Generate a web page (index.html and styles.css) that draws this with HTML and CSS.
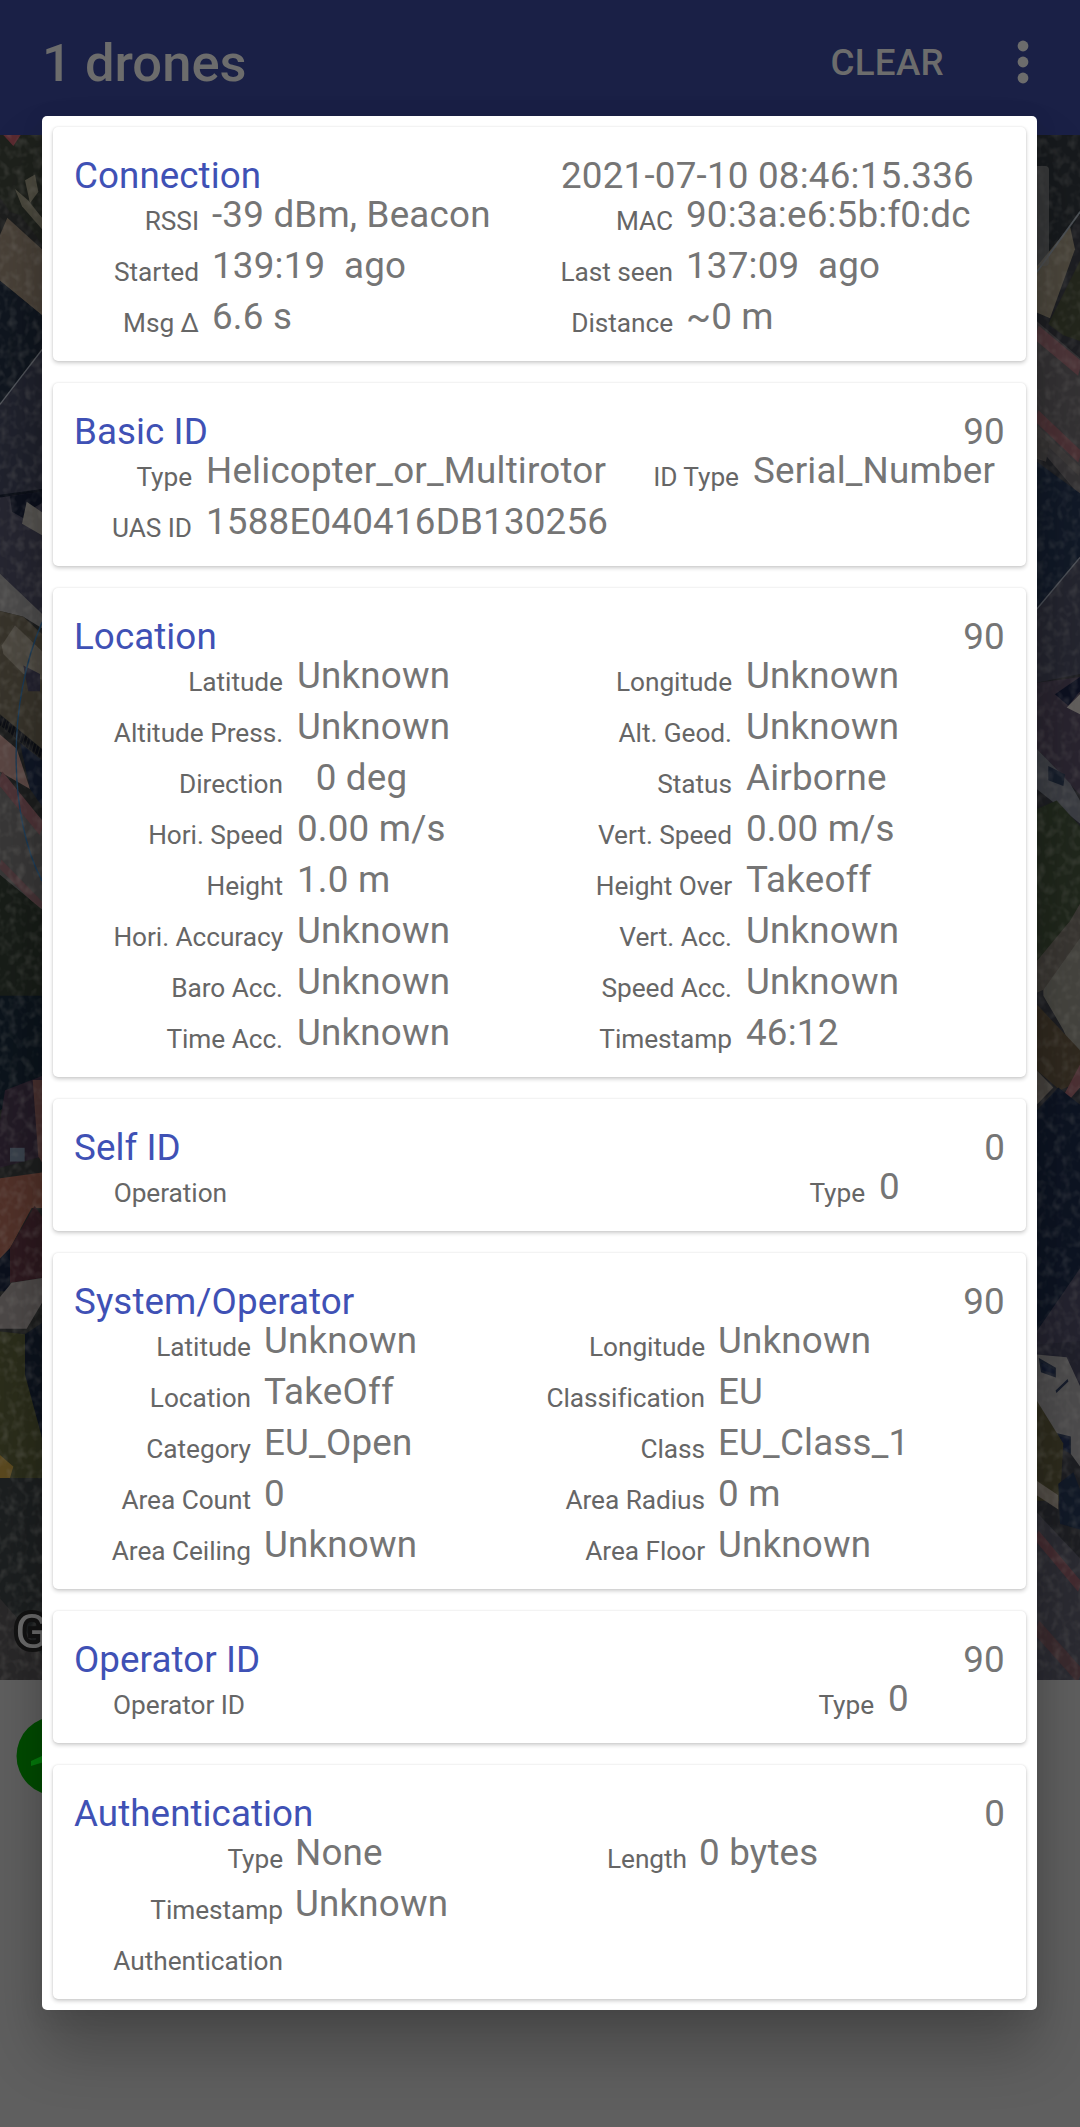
FILE: index.html
```html
<!DOCTYPE html>
<html lang="en">
<head>
<meta charset="utf-8">
<title>Drones</title>
<link rel="stylesheet" href="styles.css">
</head>
<body>
<div class="screen">
  <header class="appbar">
    <h1 class="appbar-title">1 drones</h1>
    <span class="appbar-action">CLEAR</span>
    <svg class="appbar-more" width="12" height="44" viewBox="0 0 12 44"><circle cx="6" cy="6" r="5.4"/><circle cx="6" cy="22" r="5.4"/><circle cx="6" cy="38" r="5.4"/></svg>
  </header>
  <div class="map">
    <svg class="strip" viewBox="0 61 180 2691" preserveAspectRatio="none">
      <defs>
        <filter id="grain" x="0" y="0" width="100%" height="100%"><feTurbulence type="fractalNoise" baseFrequency="0.04 0.06" numOctaves="2" seed="4"/><feColorMatrix values="0 0 0 0 .26  0 0 0 0 .25  0 0 0 0 .23  1.8 0 0 0 -.8"/></filter>
      </defs>
      <rect y="61" width="180" height="2691" fill="#1d1e1e"/>
      <path d="M0 61H126V250L60 200L30 195L0 170Z" fill="#1e211c"/>
      <path d="M10 61H62L40 80Z" fill="#5a2a30"/>
      <path d="M75 140l30-10 10 30-25 20z" fill="#4c4a3f"/>
      <path d="M45 155l40 20 41 30v20l-60-40z" fill="#4b493e"/>
      <path d="M0 235L22 205L126 260V375L0 315Z" fill="#494138"/>
      <path d="M0 315L126 375V432L0 530Z" fill="#10161f"/>
      <path d="M0 530L126 435V680L0 690Z" fill="#20222d"/>
      <path d="M0 530L126 435" stroke="#50545b" stroke-width="3"/>
      <path d="M0 690L126 680V900L0 830Z" fill="#262631"/>
      <path d="M0 690L126 680" stroke="#0c1019" stroke-width="5"/>
      <path d="M30 690l96-8v20l-30 10v25l-60-20z" fill="#0c101c"/>
      <path d="M80 700l46 18v40l-60-20z" fill="#555350"/>
      <path d="M0 825L126 895V920L70 900L0 890Z" fill="#4d4c4c"/>
      <path d="M0 890L70 900L126 930V1130L0 1070Z" fill="#38342b"/>
      <path d="M5 950L45 915L126 960V1010L70 1000L10 965Z" fill="#4e4a42"/>
      <path d="M70 985L120 1000V1030L85 1030Z" fill="#242330"/>
      <path d="M0 1080L126 1140" stroke="#0c0e14" stroke-width="16" stroke-dasharray="7 3"/>
      <path d="M0 1105L50 1130L90 1200L0 1170Z" fill="#5a4643"/>
      <path d="M60 1120L126 1150V1230L90 1200Z" fill="#101726"/>
      <path d="M0 1170L126 1255V1410L0 1350Z" fill="#393838"/>
      <path d="M0 1180L126 1270" stroke="#4d3337" stroke-width="25"/>
      <path d="M0 1330L126 1405" stroke="#473437" stroke-width="16"/>
      <path d="M0 1350L126 1410V1560L0 1570Z" fill="#181d18"/>
      <path d="M126 910C20 1050 25 1250 126 1360" fill="none" stroke="#1b3a55" stroke-width="4"/>
      <path d="M0 1560H126V1700L0 1760Z" fill="#0c141c"/>
      <path d="M15 1725L126 1700V1840L0 1860V1780Z" fill="#231b26"/>
      <path d="M98 1707H126V1850L115 1840Z" fill="#48302f"/>
      <path d="M30 1825h44v24h-44z" fill="#3a424c"/>
      <path d="M0 1878L126 1868V1930L95 1930L30 2000L0 2018Z" fill="#513129"/>
      <path d="M104 1926L126 1945V2052L30 2060V2000Z" fill="#2d191f"/>
      <path d="M0 2018L30 2000V2075H0Z" fill="#0b101c"/>
      <path d="M35 2060L126 2052V2095L80 2140H0V2085Z" fill="#4d4948"/>
      <path d="M0 2145L75 2150L125 2280L126 2400H0Z" fill="#2b2d1b"/>
      <path d="M75 2150L126 2130V2330L75 2220Z" fill="#0d131d"/>
      <path d="M0 2360l40 20-10 20H0z" fill="#5b491f"/>
      <path d="M0 2400H126V2752H0Z" fill="#1c1f20"/>
      <path d="M0 2610l60 40 66 60v42H0z" fill="#292829"/>
      <rect y="61" width="130" height="2691" filter="url(#grain)" opacity=".3"/>
    </svg>
    <svg class="strip" viewBox="0 61 180 2691" preserveAspectRatio="none">
      <rect y="61" width="180" height="2691" fill="#1d1e22"/>
      <path d="M50 61H180V200L50 320Z" fill="#171a1d"/>
      <path d="M50 290L150 220L165 260L90 380L50 370Z" fill="#4b463c"/>
      <path d="M180 195L50 300" stroke="#4b5055" stroke-width="4"/>
      <path d="M85 390L180 280V420L130 410Z" fill="#23261c"/>
      <path d="M50 385L180 450V690L50 600Z" fill="#343234"/>
      <path d="M50 405L180 468" stroke="#4d3539" stroke-width="27"/>
      <path d="M50 550L180 622" stroke="#4a3034" stroke-width="22"/>
      <path d="M50 575L180 648" stroke="#3b3838" stroke-width="16"/>
      <path d="M50 580l38 18-10 32-28-5z" fill="#353333"/>
      <path d="M50 630L180 685V795L50 885Z" fill="#111927"/>
      <path d="M50 885L180 795V1000L50 1015Z" fill="#24252f"/>
      <path d="M50 887L180 797" stroke="#484d55" stroke-width="3"/>
      <path d="M50 1015L180 1005V1210L50 1130Z" fill="#29242f"/>
      <path d="M105 1035L180 1005V1030L145 1055Z" fill="#0c1020"/>
      <path d="M140 1058L180 1035V1070Z" fill="#625f5d"/>
      <path d="M50 1130L150 1190L180 1220V1260L50 1200Z" fill="#3b3d43"/>
      <path d="M85 1160l50 15-5 20-45-10z" fill="#171e2b"/>
      <path d="M50 1235L110 1220L180 1265V1430L50 1520Z" fill="#20271c"/>
      <path d="M50 1500L150 1430L180 1400V1480L110 1540L50 1555Z" fill="#393632"/>
      <path d="M70 1550L180 1460V1690L130 1620L70 1560Z" fill="#45443f"/>
      <path d="M50 1575L180 1655V1710L120 1725L50 1690Z" fill="#30291f"/>
      <path d="M130 1735L180 1680V1720L150 1740Z" fill="#4c3034"/>
      <path d="M50 1690L100 1720L50 1750Z" fill="#44403c"/>
      <path d="M50 1760L115 1720L180 1750V2050L50 2145Z" fill="#0d1422"/>
      <path d="M50 2145L180 2035V2170L50 2175Z" fill="#24232f"/>
      <path d="M50 2168L180 2162V2250L50 2190Z" fill="#20202b"/>
      <path d="M50 2185L140 2190L180 2240V2380L130 2340L50 2280Z" fill="#4d4c4d"/>
      <path d="M60 2195l45 15v12l-40-8zM108 2250l36-20M115 2325l35 5v25l-30-10z" fill="#10172a" stroke="#171d2b" stroke-width="5"/>
      <path d="M50 2265L130 2340L120 2440H50Z" fill="#2d2b1d"/>
      <path d="M50 2405l65 25v25l-65-25z" fill="#504b45"/>
      <path d="M115 2410L160 2390L180 2420V2490L120 2480Z" fill="#111927"/>
      <path d="M50 2460L180 2540V2752H50Z" fill="#2b2b32"/>
      <path d="M50 2500L180 2590" stroke="#432b30" stroke-width="20"/>
      <path d="M50 2660L180 2745" stroke="#3a2a2e" stroke-width="28"/>
      <rect x="50" y="61" width="130" height="2691" filter="url(#grain)" opacity=".25"/>
    </svg>
    <span class="map-button"></span>
    <span class="map-logo">G</span>
  </div>
  <div class="sheet">
    <svg class="badge" width="80" height="80" viewBox="0 0 80 80"><circle cx="40" cy="40" r="39.5" fill="#004b00"/><path d="M15 50V45L28 39L44 34V43L28 46Z" fill="#057a0c"/></svg>
  </div>

  <main class="dialog">
    <section class="card">
      <div class="head"><h2>Connection</h2><span class="stamp">2021-07-10 08:46:15.336</span></div>
      <dl class="grid connection">
        <dt>RSSI</dt><dd>-39 dBm, Beacon</dd><dt>MAC</dt><dd>90:3a:e6:5b:f0:dc</dd>
        <dt>Started</dt><dd>139:19&nbsp; ago</dd><dt>Last seen</dt><dd>137:09&nbsp; ago</dd>
        <dt>Msg Δ</dt><dd>6.6 s</dd><dt>Distance</dt><dd>~0 m</dd>
      </dl>
    </section>
    <section class="card">
      <div class="head"><h2>Basic ID</h2><span>90</span></div>
      <dl class="grid basic">
        <dt>Type</dt><dd>Helicopter_or_Multirotor</dd><dt>ID Type</dt><dd>Serial_Number</dd>
        <dt>UAS ID</dt><dd>1588E040416DB130256</dd>
      </dl>
    </section>
    <section class="card">
      <div class="head"><h2>Location</h2><span>90</span></div>
      <dl class="grid location">
        <dt>Latitude</dt><dd>Unknown</dd><dt>Longitude</dt><dd>Unknown</dd>
        <dt>Altitude Press.</dt><dd>Unknown</dd><dt>Alt. Geod.</dt><dd>Unknown</dd>
        <dt>Direction</dt><dd>&nbsp; 0 deg</dd><dt>Status</dt><dd>Airborne</dd>
        <dt>Hori. Speed</dt><dd>0.00 m/s</dd><dt>Vert. Speed</dt><dd>0.00 m/s</dd>
        <dt>Height</dt><dd>1.0 m</dd><dt>Height Over</dt><dd>Takeoff</dd>
        <dt>Hori. Accuracy</dt><dd>Unknown</dd><dt>Vert. Acc.</dt><dd>Unknown</dd>
        <dt>Baro Acc.</dt><dd>Unknown</dd><dt>Speed Acc.</dt><dd>Unknown</dd>
        <dt>Time Acc.</dt><dd>Unknown</dd><dt>Timestamp</dt><dd>46:12</dd>
      </dl>
    </section>
    <section class="card">
      <div class="head"><h2>Self ID</h2><span>0</span></div>
      <dl class="grid self">
        <dt>Operation</dt><dd></dd><dt>Type</dt><dd>0</dd>
      </dl>
    </section>
    <section class="card">
      <div class="head"><h2>System/Operator</h2><span>90</span></div>
      <dl class="grid system">
        <dt>Latitude</dt><dd>Unknown</dd><dt>Longitude</dt><dd>Unknown</dd>
        <dt>Location</dt><dd>TakeOff</dd><dt>Classification</dt><dd>EU</dd>
        <dt>Category</dt><dd>EU_Open</dd><dt>Class</dt><dd>EU_Class_1</dd>
        <dt>Area Count</dt><dd>0</dd><dt>Area Radius</dt><dd>0 m</dd>
        <dt>Area Ceiling</dt><dd>Unknown</dd><dt>Area Floor</dt><dd>Unknown</dd>
      </dl>
    </section>
    <section class="card">
      <div class="head"><h2>Operator ID</h2><span>90</span></div>
      <dl class="grid operator">
        <dt>Operator ID</dt><dd></dd><dt>Type</dt><dd>0</dd>
      </dl>
    </section>
    <section class="card">
      <div class="head"><h2>Authentication</h2><span>0</span></div>
      <dl class="grid auth">
        <dt>Type</dt><dd>None</dd><dt>Length</dt><dd>0 bytes</dd>
        <dt>Timestamp</dt><dd>Unknown</dd><dt></dt><dd></dd>
        <dt>Authentication</dt><dd></dd>
      </dl>
    </section>
  </main>
</div>
</body>
</html>
```
FILE: styles.css
```css
* { box-sizing: border-box; }
body { margin: 0; font-family: Roboto, sans-serif; }
h1, h2, dl, dd { margin: 0; }

.screen { position: relative; width: 1080px; height: 2127px; overflow: hidden; background: #5f5f5f; }

.appbar { height: 135px; padding: 0 51px 11px 42px; display: flex; align-items: center; background: #1a2046; color: #6c6c6c; }
.appbar-title { flex: 1; padding-top: 2px; font-size: 52.5px; font-weight: 500; line-height: 62px; }
.appbar-action { font-size: 36.75px; font-weight: 500; letter-spacing: .3px; margin-right: 73px; }
.appbar-more { fill: #6c6c6c; }

.map { position: relative; height: 1545px; display: flex; justify-content: space-between; overflow: hidden; background: #1d1e22; }
.strip { width: 60px; height: 1545px; }
.map-button { position: absolute; left: 950px; top: 31px; width: 99px; height: 100px; border-radius: 4px; background: rgba(75, 75, 75, .6); }
.map-logo { position: absolute; left: 15px; top: 1467px; font-size: 49px; line-height: 60px; color: #6b6b6b; -webkit-text-stroke: 8px #131313; paint-order: stroke fill; }

.sheet { padding: 36px 0 0 16px; }
.badge { display: block; }

.dialog { position: absolute; left: 42px; top: 116px; width: 995px; height: 1894px; padding: 11px; display: flex; flex-direction: column; gap: 22px; border-radius: 5px; background: #fff; box-shadow: 0 40px 60px rgba(0, 0, 0, .24), 0 4px 24px rgba(0, 0, 0, .08); }
.card { padding: 27px 21px 15px; border-radius: 5px; background: #fff; box-shadow: 0 2px 4px rgba(0, 0, 0, .2), 0 0 2px rgba(0, 0, 0, .1); font-size: 36.75px; line-height: 43px; color: #757575; }
.head { height: 39px; display: flex; justify-content: space-between; letter-spacing: .22px; }
.head h2 { font-size: inherit; font-weight: 400; letter-spacing: .07px; color: #3f51b5; }
.stamp { margin-right: 31px; }

.grid { display: grid; grid-auto-rows: 51px; margin-left: 37px; white-space: nowrap; }
.grid dt { padding-top: 13px; font-size: 26.25px; line-height: 31px; letter-spacing: -.05px; text-align: right; color: #666; }
.grid dd { padding-left: 14px; letter-spacing: .2px; }
.connection { grid-template-columns: 88px 291px 183px 1fr; }
.connection dd { padding-left: 13px; }
.basic { grid-template-columns: 81px 419px 128px 1fr; }
.location { grid-template-columns: 172px 300px 149px 1fr; }
.self { grid-template-columns: 116px 501px 137px 1fr; }
.system { grid-template-columns: 140px 280px 174px 1fr; }
.system dd { padding-left: 13px; }
.operator { grid-template-columns: 134px 501px 128px 1fr; }
.auth { grid-template-columns: 172px 280px 124px 1fr; }
.auth dd { padding-left: 12px; }
```
